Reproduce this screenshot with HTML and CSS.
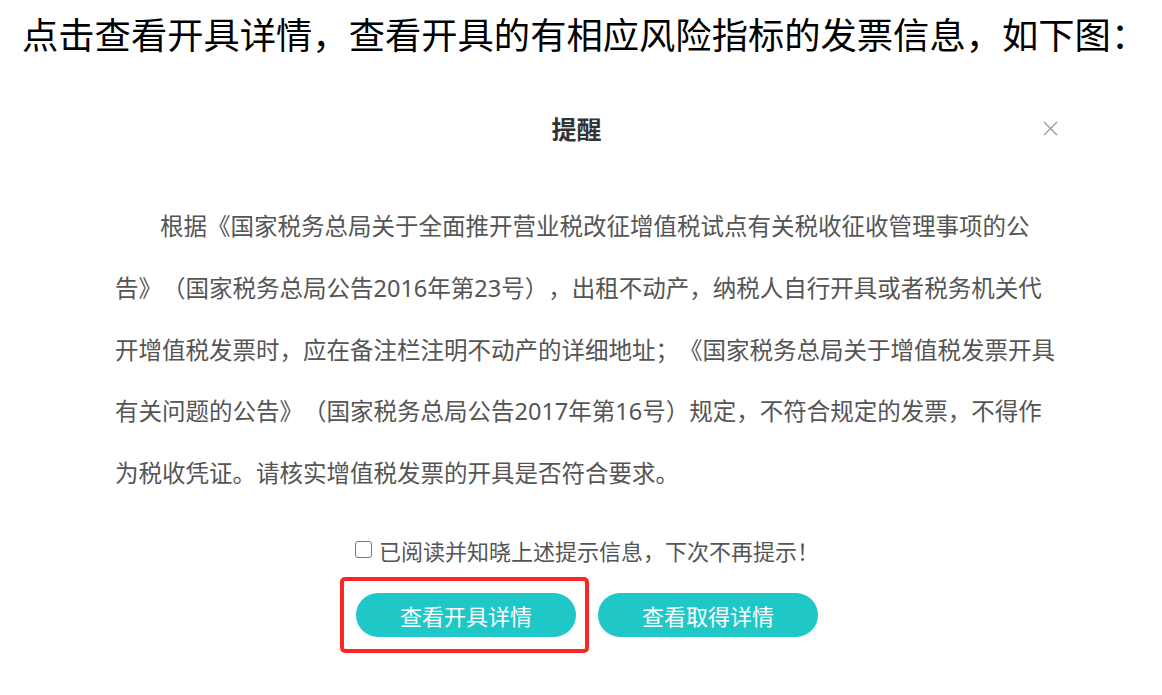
FILE: index.html
```html
<!DOCTYPE html>
<html lang="zh-CN">
<head>
    <meta charset="UTF-8">
    <meta name="viewport" content="width=device-width, initial-scale=1.0">
    <title>提醒</title>
    <link rel="stylesheet" href="styles.css">
</head>
<body>
    <h1 class="lead">点击查看开具详情，查看开具的有相应风险指标的发票信息，如下图：</h1>

    <div class="dialog">
        <div class="dialog-header">
            <div class="dialog-title">提醒</div>
            <button class="dialog-close" aria-label="关闭">
                <svg width="15" height="15" viewBox="0 0 15 15">
                    <path d="M1 1 L14 14 M14 1 L1 14" stroke="#9a9a9a" stroke-width="1.4" fill="none"/>
                </svg>
            </button>
        </div>

        <p class="dialog-body">
            根据《国家税务总局关于全面推开营业税改征增值税试点有关税收征收管理事项的公<br>
            告》（国家税务总局公告2016年第23号），出租不动产，纳税人自行开具或者税务机关代<br>
            开增值税发票时，应在备注栏注明不动产的详细地址；《国家税务总局关于增值税发票开具<br>
            有关问题的公告》（国家税务总局公告2017年第16号）规定，不符合规定的发票，不得作<br>
            为税收凭证。请核实增值税发票的开具是否符合要求。
        </p>

        <label class="remember">
            <input type="checkbox">
            <span>已阅读并知晓上述提示信息，下次不再提示！</span>
        </label>

        <div class="actions">
            <span class="highlight">
                <button class="btn">查看开具详情</button>
            </span>
            <button class="btn">查看取得详情</button>
        </div>
    </div>
</body>
</html>
```

FILE: styles.css
```css
body {
    font-family: "Noto Sans", "Noto Sans CJK SC", sans-serif;
    margin: 0;
    padding: 0;
    background-color: #fff;
    text-spacing-trim: space-all;
}

.lead {
    margin: 0;
    padding-left: 22px;
    font-size: 36.3px;
    font-weight: normal;
    line-height: 70px;
    color: #000;
}

.dialog {
    width: 984px;
    margin-left: 95px;
    padding: 0 20px 40px;
    box-sizing: border-box;
}

.dialog-header {
    display: flex;
    align-items: center;
    padding-top: 33px;
    height: 50px;
}

.dialog-title {
    flex: 1;
    text-align: center;
    font-size: 25px;
    font-weight: bold;
    color: #333;
}

.dialog-close {
    width: 24px;
    height: 24px;
    margin-right: -3px;
    padding: 0;
    border: none;
    background: none;
    display: flex;
    align-items: center;
    justify-content: center;
    cursor: pointer;
}

.dialog-body {
    margin: 43px 0 0;
    font-size: 23.5px;
    line-height: 61.75px;
    text-indent: 45px;
    color: #555;
}

.remember {
    display: flex;
    align-items: center;
    justify-content: center;
    margin-top: 30px;
    height: 30px;
    font-size: 22px;
    color: #555;
}

.remember input {
    appearance: none;
    -webkit-appearance: none;
    width: 17px;
    height: 17px;
    margin: 0 7px 0 0;
    border: 1.5px solid #777;
    border-radius: 3px;
    box-sizing: border-box;
}

.actions {
    display: flex;
    justify-content: center;
    gap: 22px;
    margin-top: 28px;
}

.highlight {
    position: relative;
    display: flex;
}

.highlight::after {
    content: "";
    position: absolute;
    top: -16px;
    left: -16px;
    right: -13px;
    bottom: -16px;
    border: 4px solid #ff2424;
    border-radius: 5px;
}

.btn {
    width: 220px;
    height: 44px;
    border: none;
    border-radius: 22px;
    background-color: #1fc7c7;
    color: #fff;
    font-family: inherit;
    font-size: 22px;
    cursor: pointer;
}
```
